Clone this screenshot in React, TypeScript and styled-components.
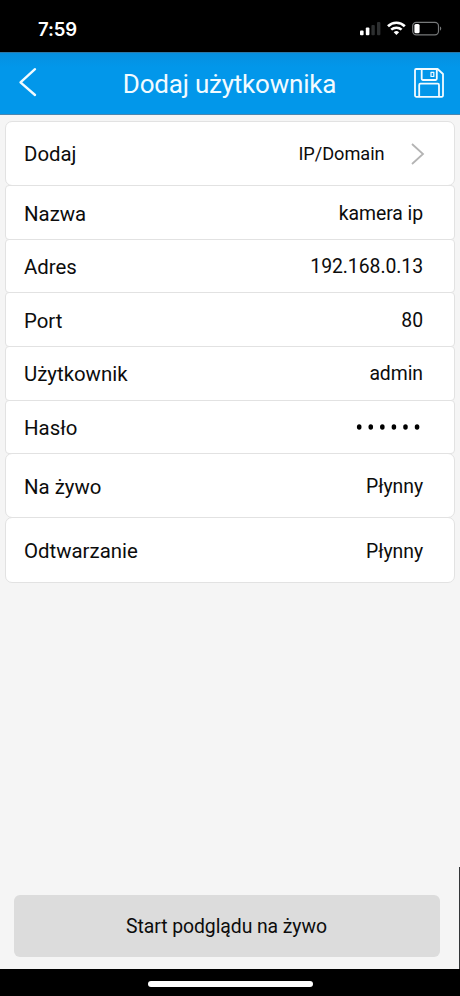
import React from "react";
import styled, { createGlobalStyle } from "styled-components";

const GlobalStyle = createGlobalStyle`
  * { box-sizing: border-box; }
  html, body { margin: 0; padding: 0; background: #f5f5f5; }
  body { font-family: Roboto, "Liberation Sans", sans-serif; color: #0c0c0c; overflow: hidden; }
  button { font: inherit; color: inherit; border: 0; background: none; padding: 0; }
`;

const Screen = styled.main`
  width: 460px;
  height: 996px;
  display: flex;
  flex-direction: column;
  background: #f5f5f5;
`;

const StatusBar = styled.div`
  height: 52px;
  flex: none;
  display: flex;
  justify-content: space-between;
  padding: 0 17px 0 38px;
  background: #000;
  color: #fff;
`;

const Clock = styled.span`
  padding-top: 18px;
  font: 600 18.5px/22px Inter, "Liberation Sans", sans-serif;
  letter-spacing: -0.1px;
`;

const StatusIcons = styled.svg`
  width: 84px;
  height: 20px;
  margin-top: 18px;
`;

const Header = styled.header`
  height: 63px;
  flex: none;
  display: grid;
  grid-template-columns: 60px 1fr 61px;
  background: linear-gradient(#0690e0, #0297ea 14px);
  border-top: 1px solid #2a78a8;
  border-bottom: 1px solid #4b86b0;
  color: #f2fbff;
`;

const Title = styled.h1`
  margin: 0;
  padding-top: 15px;
  text-align: center;
  font-size: 26px;
  font-weight: 400;
  line-height: 32px;
  letter-spacing: -0.21px;
  white-space: nowrap;
`;

const HeaderButton = styled.button`
  display: flex;
  align-items: flex-start;
`;

const BackIcon = styled.svg`
  width: 20px;
  height: 30px;
  margin: 14px 0 0 18px;
`;

const SaveIcon = styled.svg`
  width: 32px;
  height: 32px;
  margin: 14px 0 0 14px;
`;

const Form = styled.section`
  flex: 1;
  padding: 6px 5px 0;
`;

const Row = styled.div<{ $height: number; $radius?: number }>`
  height: ${(p) => p.$height}px;
  display: flex;
  align-items: center;
  justify-content: space-between;
  padding: 0 31px 0 18px;
  background: #fff;
  border: 1px solid #e2e2e2;
  border-radius: ${(p) => p.$radius ?? 4}px;
  & + & { margin-top: -1px; }
`;

const Label = styled.span<{ $shift?: number }>`
  font-size: 20.4px;
  line-height: 26px;
  padding-top: ${(p) => p.$shift ?? 1}px;
`;

const Value = styled.span<{ $size?: number; $shift?: number }>`
  display: flex;
  align-items: center;
  font-size: ${(p) => p.$size ?? 19.4}px;
  line-height: 26px;
  letter-spacing: -0.06px;
  padding-top: ${(p) => p.$shift ?? 1}px;
`;

const Chevron = styled.svg`
  width: 16px;
  height: 24px;
  margin: 0 -3px 0 25.5px;
`;

const Dots = styled.svg`
  width: 67px;
  height: 8px;
`;

const Footer = styled.footer`
  height: 102px;
  flex: none;
  display: flex;
  justify-content: space-between;
  align-items: flex-start;
`;

const StartButton = styled.button`
  width: 426px;
  height: 62px;
  margin: 28px 0 0 13.5px;
  border-radius: 6px;
  background: #dcdcdc;
  font-size: 19.4px;
  letter-spacing: -0.08px;
`;

const ScrollMark = styled.div`
  width: 1px;
  height: 102px;
  background: #333638;
`;

const HomeBar = styled.div`
  height: 27px;
  flex: none;
  padding-top: 12px;
  background: #000;
`;

const HomeIndicator = styled.div`
  width: 165px;
  height: 6px;
  margin-left: 148px;
  border-radius: 3px;
  background: #fff;
`;

const fields = [
  { label: "Nazwa", value: "kamera ip", height: 55, shift: 2 },
  { label: "Adres", value: "192.168.0.13", height: 54, shift: 1 },
  { label: "Port", value: "80", height: 55, shift: 2 },
  { label: "Użytkownik", value: "admin", height: 55, shift: 1 },
];

const qualities = [
  { label: "Na żywo", height: 65, shift: 3 },
  { label: "Odtwarzanie", height: 66, shift: 3 },
];

export default function App() {
  return (
    <Screen>
      <GlobalStyle />
      <StatusBar>
        <Clock>7:59</Clock>
        <StatusIcons viewBox="0 0 84 20" fill="none">
          <rect x="1" y="12.4" width="3.6" height="4.8" rx="1" fill="#fff" />
          <rect x="6.8" y="9.6" width="3.6" height="7.6" rx="1" fill="#fff" />
          <rect x="12.4" y="7" width="3.4" height="10.2" rx="1" fill="#2d2f30" />
          <rect x="18" y="4" width="3.4" height="13.2" rx="1" fill="#2d2f30" />
          <path d="M29 8.2a12 12 0 0 1 16.8 0" stroke="#fff" strokeWidth="2.7" />
          <path d="M32.2 11.7a7.6 7.6 0 0 1 10.4 0" stroke="#fff" strokeWidth="2.5" />
          <path d="M34.7 14.2a4 4 0 0 1 5.4 0l-2.7 2.8z" fill="#fff" />
          <rect x="53.7" y="4.3" width="25.8" height="12.6" rx="3.6" stroke="#77797a" strokeWidth="1.2" />
          <rect x="55.4" y="6" width="5.2" height="9.2" rx="1.5" fill="#fff" />
          <path d="M81 8.5c1.7.6 1.7 3.6 0 4.2z" fill="#77797a" />
        </StatusIcons>
      </StatusBar>
      <Header>
        <HeaderButton aria-label="Wstecz">
          <BackIcon viewBox="0 0 20 30" fill="none" stroke="currentColor" strokeWidth="2.4" strokeLinecap="round" strokeLinejoin="round">
            <path d="M17 2.2 2.5 15.3 17 28" />
          </BackIcon>
        </HeaderButton>
        <Title>Dodaj użytkownika</Title>
        <HeaderButton aria-label="Zapisz">
          <SaveIcon viewBox="0 0 32 32" fill="none" stroke="currentColor" strokeWidth="1.8" strokeLinejoin="round">
            <path d="M3.2 2h21.4L30 7v21.6a1.2 1.2 0 0 1-1.2 1.2H3.2A1.2 1.2 0 0 1 2 28.600V3.200A1.2 1.2 0 0 1 3.200 2z" />
            <path d="M8.7 2v9.8a1.2 1.2 0 0 0 1.2 1.2h12.700a1.2 1.2 0 0 0 1.2-1.2V2M6.200 29.600V17.900A1.2 1.2 0 0 1 7.400 16.700H24.800A1.2 1.2 0 0 1 26 17.900V29.600" />
            <rect x="18" y="5.3" width="2.8" height="4.2" strokeWidth="1.2" />
          </SaveIcon>
        </HeaderButton>
      </Header>
      <Form>
        <Row $height={65} $radius={7}>
          <Label>Dodaj</Label>
          <Value $size={18.2}>
            IP/Domain
            <Chevron viewBox="0 0 16 24" fill="none" stroke="#b4b4b4" strokeWidth="1.8">
              <path d="M2 2l11 10L2 22" />
            </Chevron>
          </Value>
        </Row>
        {fields.map((f) => (
          <Row key={f.label} $height={f.height}>
            <Label $shift={f.shift}>{f.label}</Label>
            <Value $shift={f.shift}>{f.value}</Value>
          </Row>
        ))}
        <Row $height={54}>
          <Label>Hasło</Label>
          <Dots viewBox="0 0 67 8" fill="#000">
            {Array.from({ length: 6 }, (_, i) => (
              <ellipse key={i} cx={3.2 + i * 11.57} cy={4} rx={2.3} ry={2.7} />
            ))}
          </Dots>
        </Row>
        {qualities.map((q) => (
          <Row key={q.label} $height={q.height} $radius={7}>
            <Label $shift={2}>{q.label}</Label>
            <Value $shift={q.shift}>Płynny</Value>
          </Row>
        ))}
      </Form>
      <Footer>
        <StartButton>Start podglądu na żywo</StartButton>
        <ScrollMark />
      </Footer>
      <HomeBar>
        <HomeIndicator />
      </HomeBar>
    </Screen>
  );
}
